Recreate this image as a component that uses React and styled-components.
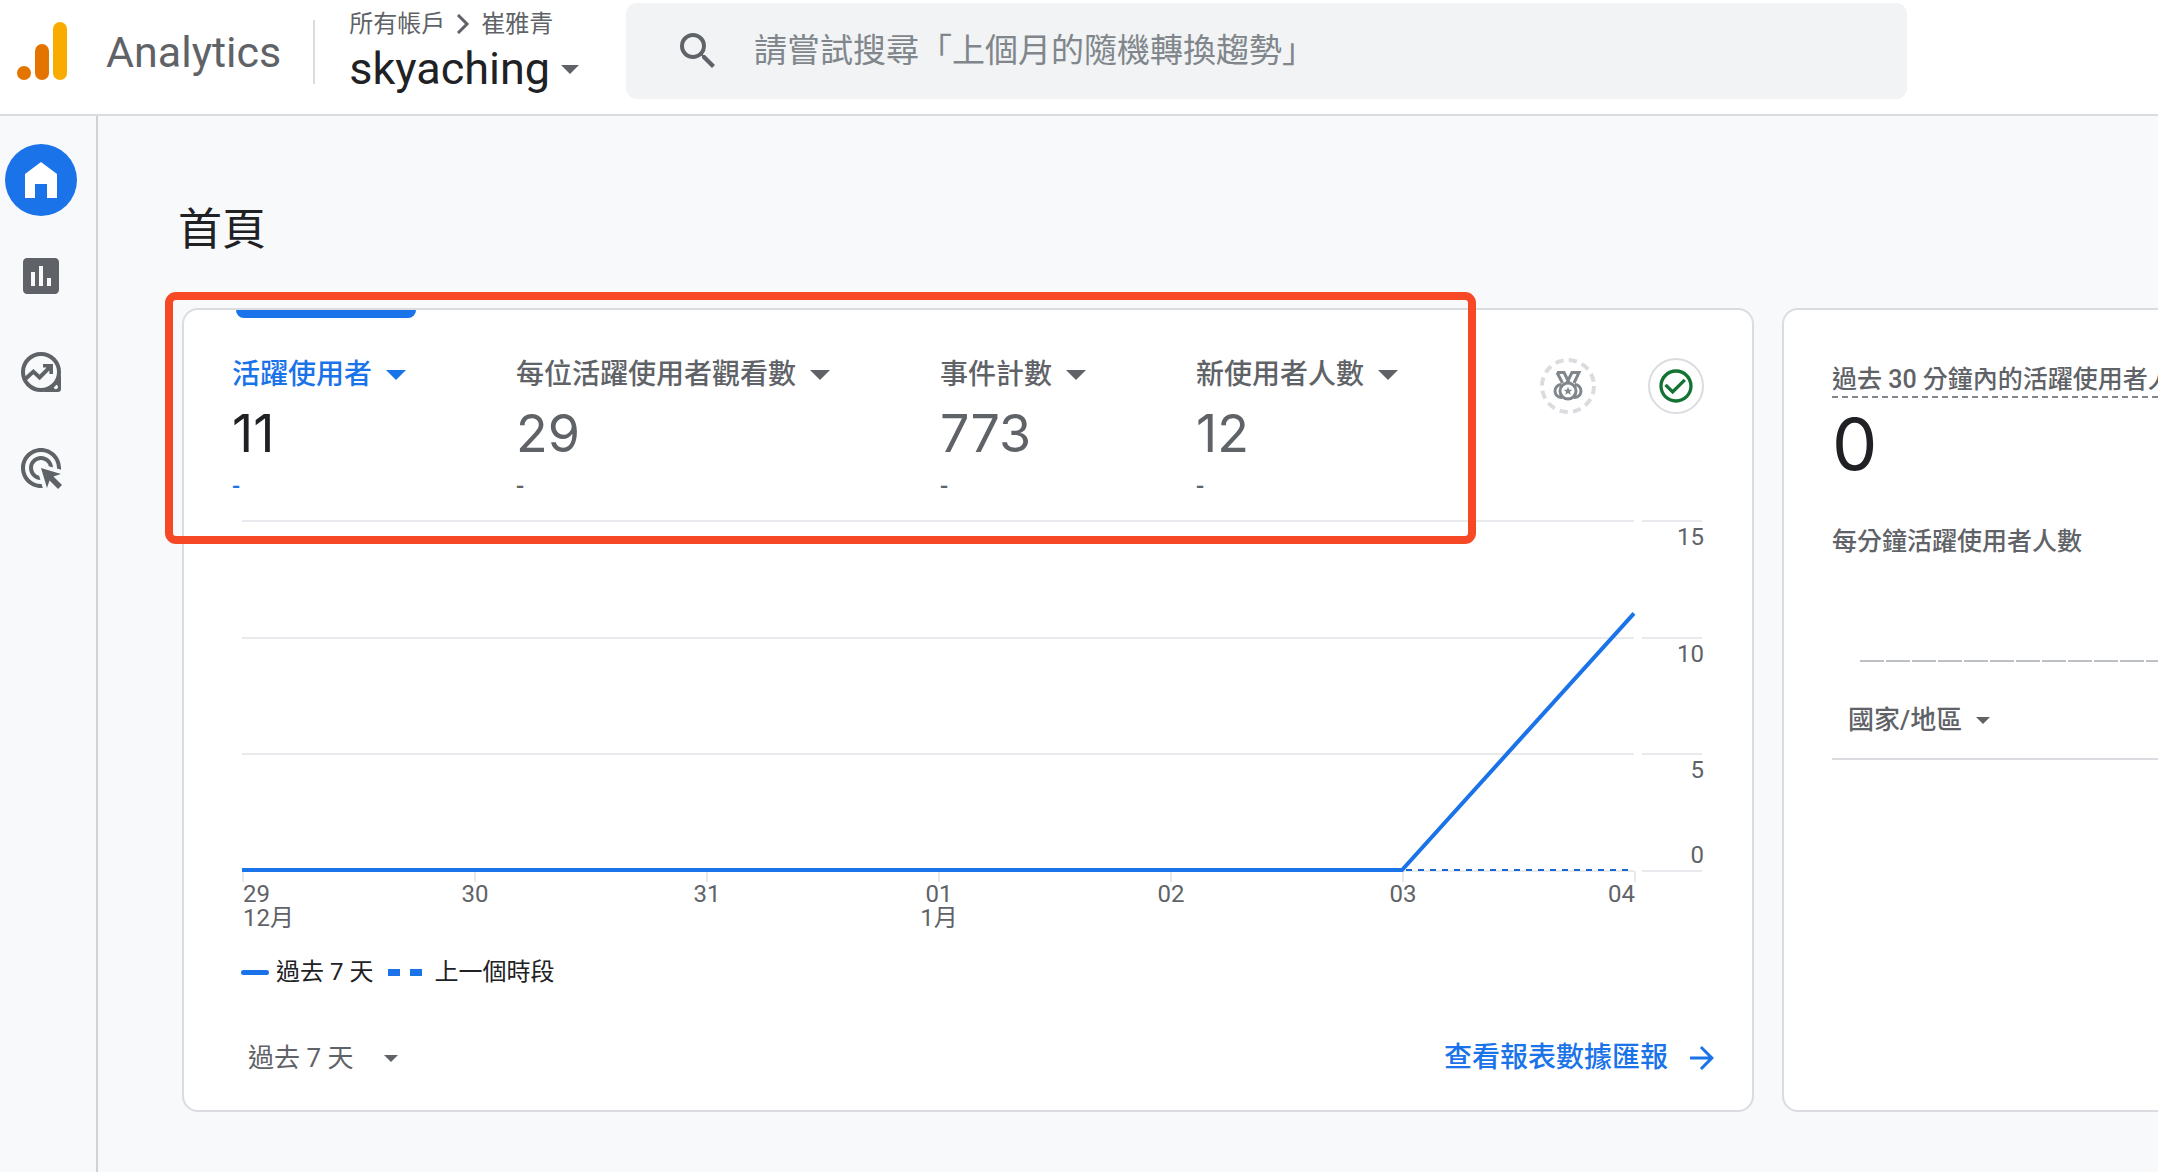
import styled, { createGlobalStyle } from 'styled-components'
import { MdAdsClick, MdArrowForward, MdAssessment, MdCheckCircleOutline, MdSearch } from 'react-icons/md'

const GlobalStyle = createGlobalStyle`
  * {
    box-sizing: border-box;
  }
  body {
    margin: 0;
    background: #f8f9fb;
    color: #202124;
    font-family: Roboto, 'Noto Sans CJK TC', sans-serif;
  }
  button,
  input,
  select {
    font-family: inherit;
  }
`

const Page = styled.div`
  display: flex;
  flex-direction: column;
  min-height: 100vh;
  overflow: hidden;
`

const StyledHeader = styled.header`
  display: flex;
  align-items: center;
  height: 116px;
  padding: 0 16px;
  background: #fff;
  border-bottom: 2px solid #dadce0;
`

const Brand = styled.a`
  display: flex;
  align-items: center;
  gap: 38px;
  padding: 0 32px 12px 0;
  color: #5f6368;
  font-size: 43px;
  line-height: 60px;
  text-decoration: none;
`

const BrandName = styled.span`
  padding-top: 2px;
`

const Property = styled.div`
  display: flex;
  flex-direction: column;
  margin-bottom: 12px;
  position: relative;
  padding-left: 36px;
  &::before {
    content: '';
    position: absolute;
    left: 0;
    top: 14px;
    width: 2px;
    height: 64px;
    background: #dadce0;
  }
`

const Breadcrumb = styled.div`
  display: flex;
  align-items: center;
  gap: 11px;
  color: #5f6368;
  font-size: 24px;
  line-height: 36px;
`

const PropertyButton = styled.button`
  display: flex;
  align-items: center;
  gap: 11px;
  padding: 0;
  border: 0;
  background: none;
  color: #202124;
  font-size: 45px;
  line-height: 54px;
  svg {
    color: #5f6368;
  }
`

const Search = styled.label`
  display: flex;
  align-items: center;
  flex: 1;
  gap: 32px;
  height: 96px;
  margin: 0 235px 12px 47px;
  padding: 0 48px;
  border-radius: 11px;
  background: #f1f3f4;
  color: #5f6368;
`

const SearchInput = styled.input`
  flex: 1;
  min-width: 0;
  padding: 0;
  border: 0;
  outline: 0;
  background: none;
  font-size: 33px;
  line-height: 48px;
  &::placeholder {
    color: #80868b;
    opacity: 1;
  }
`

const Body = styled.div`
  display: flex;
  flex: 1;
`

const Sidebar = styled.nav`
  display: flex;
  flex-direction: column;
  align-items: center;
  gap: 24px;
  width: 98px;
  flex-shrink: 0;
  padding: 28px 14px 0 0;
  border-right: 2px solid #d0d2d6;
`

const NavLink = styled.a`
  display: flex;
  align-items: center;
  justify-content: center;
  width: 72px;
  height: 72px;
  border-radius: 50%;
  background: ${(props) => (props.$active ? '#1a73e8' : 'transparent')};
  color: ${(props) => (props.$active ? '#fff' : '#5f6368')};
`

const Main = styled.main`
  flex: 1;
  min-width: 0;
  padding: 82px 0 60px 80px;
`

const Title = styled.h1`
  margin: 0 0 46px;
  font-size: 44px;
  font-weight: 400;
  line-height: 64px;
`

const Board = styled.div`
  display: flex;
  gap: 28px;
  padding-left: 4px;
`

const Card = styled.section`
  position: relative;
  display: flex;
  flex-direction: column;
  flex: 0 0 ${(props) => props.$basis};
  padding: 0 48px;
  border: 2px solid #dadce0;
  border-radius: 16px;
  background: #fff;
`

const Highlight = styled.div`
  position: absolute;
  top: -18px;
  left: -19px;
  right: 276px;
  height: 252px;
  border: 8px solid #f64824;
  border-radius: 11px;
  pointer-events: none;
`

const Indicator = styled.div`
  width: 180px;
  height: 8px;
  margin-left: 4px;
  border-radius: 0 0 8px 8px;
  background: #1a73e8;
`

const CardTop = styled.div`
  display: flex;
  justify-content: space-between;
  align-items: flex-start;
  padding: 37px 0 21px;
`

const Metrics = styled.div`
  display: flex;
  gap: 110px;
`

const Metric = styled.div`
  color: ${(props) => (props.$active ? '#1a73e8' : '#5f6368')};
`

const MetricValue = styled.div`
  color: ${(props) => (props.$active ? '#202124' : '#5f6368')};
  font-family: Inter, sans-serif;
  font-size: 52px;
  line-height: 78px;
`

const MetricChange = styled.div`
  font-size: 24px;
  font-weight: 500;
  line-height: 26px;
`

const DropdownBox = styled.div`
  display: inline-flex;
  align-items: center;
  gap: ${(props) => props.$gap};
`

const Select = styled.select`
  appearance: none;
  padding: 0;
  border: 0;
  outline: 0;
  background: none;
  color: inherit;
  font-size: ${(props) => props.$size};
  font-weight: ${(props) => props.$weight};
  line-height: 40px;
`

const Badges = styled.div`
  display: flex;
  gap: 52px;
  padding-top: 3px;
`

const Badge = styled.button`
  display: flex;
  align-items: center;
  justify-content: center;
  width: 56px;
  height: 56px;
  padding: 0;
  border: ${(props) => (props.$outlined ? '2px solid #dadce0' : '0')};
  border-radius: 50%;
  background: none;
  color: ${(props) => (props.$outlined ? '#137333' : '#80868b')};
`

const ChartSvg = styled.svg`
  display: block;
  margin-left: 10px;
  overflow: visible;
  font-size: 24px;
  fill: #5f6368;
`

const Legend = styled.div`
  display: flex;
  align-items: center;
  margin: 18px 0 0 9px;
  font-size: 24px;
  line-height: 36px;
`

const LegendItem = styled.span`
  display: flex;
  align-items: center;
  gap: ${(props) => props.$gap};
  margin-right: 15px;
`

const Swatch = styled.span`
  width: 28px;
  height: 5px;
  border-radius: 3px;
  background: #1a73e8;
`

const DashSwatch = styled.span`
  display: flex;
  justify-content: space-between;
  width: 34px;
  &::before,
  &::after {
    content: '';
    width: 12px;
    height: 7px;
    background: #1a73e8;
  }
`

const CardFooter = styled.div`
  display: flex;
  align-items: center;
  justify-content: space-between;
  margin: 48px -16px 32px 16px;
  color: #5f6368;
`

const ReportLink = styled.a`
  display: flex;
  align-items: center;
  gap: 16px;
  color: #1a73e8;
  font-size: 28px;
  font-weight: 500;
  line-height: 40px;
  text-decoration: none;
`

const RealtimeTitle = styled.h2`
  align-self: flex-start;
  margin: 54px 0 0;
  border-bottom: 2px dashed #80868b;
  color: #5f6368;
  font-size: 25px;
  font-weight: 500;
  line-height: 32px;
  white-space: nowrap;
`

const RealtimeValue = styled.div`
  font-family: Inter, sans-serif;
  font-size: 72px;
  line-height: 92px;
`

const RealtimeLabel = styled.div`
  margin-top: 34px;
  color: #5f6368;
  font-size: 25px;
  font-weight: 500;
  line-height: 36px;
`

const MinuteBars = styled.div`
  display: flex;
  gap: 2px;
  margin: 100px 0 0 28px;
  overflow: hidden;
`

const MinuteBar = styled.span`
  flex: 0 0 24px;
  height: 2px;
  background: #bdc1c6;
`

const CountryRow = styled.div`
  margin-top: 38px;
  padding: 0 0 18px 16px;
  border-bottom: 2px solid #dadce0;
  color: #5f6368;
`

const EmptyText = styled.p`
  margin: 30px 0 0;
  color: #5f6368;
  font-size: 24px;
  line-height: 36px;
  text-align: center;
`

const METRICS = [
  { name: '活躍使用者', value: '11' },
  { name: '每位活躍使用者觀看數', value: '29' },
  { name: '事件計數', value: '773' },
  { name: '新使用者人數', value: '12' },
]

const DAYS = [
  { day: '29', month: '12月', users: 0 },
  { day: '30', users: 0 },
  { day: '31', users: 0 },
  { day: '01', month: '1月', users: 0 },
  { day: '02', users: 0 },
  { day: '03', users: 0 },
  { day: '04', users: 11 },
]

const MAX_USERS = 15
const PLOT_WIDTH = 1392
const PLOT_HEIGHT = 350

function Caret({ width = 14, height = 7 }) {
  return (
    <svg width={width} height={height} viewBox="0 0 20 10" preserveAspectRatio="none" aria-hidden="true">
      <path d="M0 0h20L10 10z" fill="currentColor" />
    </svg>
  )
}

function Dropdown({ label, value, size, weight = 400, gap, caret }) {
  return (
    <DropdownBox $gap={gap}>
      <Select aria-label={label} $size={size} $weight={weight}>
        <option>{value}</option>
      </Select>
      <Caret {...caret} />
    </DropdownBox>
  )
}

function Logo() {
  return (
    <svg width="52" height="60" viewBox="0 0 52 60" aria-hidden="true">
      <circle cx="8" cy="52" r="7" fill="#e37400" />
      <rect x="19" y="23" width="14" height="36" rx="7" fill="#e37400" />
      <rect x="37" y="1" width="14" height="58" rx="7" fill="#f9ab00" />
    </svg>
  )
}

function HomeIcon() {
  return (
    <svg width="48" height="48" viewBox="0 0 24 24" aria-hidden="true">
      <path d="M4 21V9l8-6 8 6v12h-5v-7H9v7z" fill="currentColor" />
    </svg>
  )
}

function ExploreIcon() {
  return (
    <svg width="48" height="48" viewBox="0 0 24 24" aria-hidden="true">
      <g fill="none" stroke="currentColor" strokeWidth="2">
        <circle cx="12" cy="12" r="9" />
        <path d="M4 15.6l4.2-3.8 3.1 2.9 5.4-5.4" />
      </g>
      <path d="M13 8h5v5h-1.8v-1.6L14.6 9.8H13z" fill="currentColor" />
      <path
        d="M22 12v8.5a1.5 1.5 0 0 1-1.5 1.5H12a10 10 0 0 0 5.5-2.5A10 10 0 0 0 22 12zM19.4 18.4a1.1 1.1 0 1 0 .01 0z"
        fill="currentColor"
        fillRule="evenodd"
      />
    </svg>
  )
}

function MedalIcon() {
  return (
    <svg width="56" height="56" viewBox="0 0 56 56" fill="none" aria-hidden="true">
      <circle cx="28" cy="28" r="26" stroke="#dadce0" strokeWidth="4" strokeDasharray="8.2 5.414" />
      <g stroke="currentColor" strokeWidth="3">
        <path d="M17 14.5h7l4 8 4-8h7L34 25M17 14.5L22.5 25M24 14.5l5 10M32 14.5l-5 10" />
        <circle cx="28" cy="33" r="8" />
        <path d="M21 26.5a6.5 6.5 0 1 0 1 13M35 26.5a6.5 6.5 0 1 1-1 13" />
      </g>
      <path
        d="M28 28.5l1.1 3.2h3.4l-2.7 2 1 3.3-2.8-2-2.8 2 1-3.3-2.7-2h3.4z"
        fill="currentColor"
      />
    </svg>
  )
}

function Chart() {
  const x = (i) => (i * PLOT_WIDTH) / (DAYS.length - 1)
  const y = (users) => PLOT_HEIGHT - (users * PLOT_HEIGHT) / MAX_USERS
  const points = DAYS.map((d, i) => `${x(i)},${y(d.users)}`).join(' ')
  const anchor = (i) => (i === 0 ? 'start' : i === DAYS.length - 1 ? 'end' : 'middle')

  return (
    <ChartSvg viewBox="0 0 1462 416" role="img" aria-label="活躍使用者">
      {[15, 10, 5, 0].map((tick) => (
        <g key={tick}>
          <path
            d={`M0 ${Math.round(y(tick)) + 1}H${PLOT_WIDTH}m8 0h60`}
            stroke="#e8eaed"
            strokeWidth="2"
          />
          <text x="1462" y={Math.round(y(tick)) + (tick ? 25 : -7)} textAnchor="end">
            {tick}
          </text>
        </g>
      ))}
      {DAYS.map((d, i) => (
        <g key={d.day}>
          <path d={`M${x(i) + 1} ${PLOT_HEIGHT + 1}v11`} stroke="#e8eaed" strokeWidth="2" />
          <text x={x(i) + 1} y="382" textAnchor={anchor(i)}>
            {d.day}
          </text>
          <text x={x(i) + 1} y="406" textAnchor={anchor(i)}>
            {d.month}
          </text>
        </g>
      ))}
      <path d={`M${x(5)} 350H${PLOT_WIDTH}`} stroke="#1967d2" strokeWidth="2" strokeDasharray="6 6" strokeDashoffset="8" />
      <polyline points={points} fill="none" stroke="#1a73e8" strokeWidth="4" />
    </ChartSvg>
  )
}

function Header() {
  return (
    <StyledHeader>
      <Brand href="#home">
        <Logo />
        <BrandName>Analytics</BrandName>
      </Brand>
      <Property>
        <Breadcrumb>
          所有帳戶
          <svg width="14" height="20" viewBox="0 0 14 20" aria-hidden="true">
            <path d="M2 1l9 9-9 9" fill="none" stroke="currentColor" strokeWidth="3" />
          </svg>
          崔雅青
        </Breadcrumb>
        <PropertyButton type="button">
          skyaching
          <Caret width={18} height={9} />
        </PropertyButton>
      </Property>
      <Search>
        <MdSearch size={48} aria-hidden="true" />
        <SearchInput type="search" aria-label="搜尋" placeholder="請嘗試搜尋「上個月的隨機轉換趨勢」" />
      </Search>
    </StyledHeader>
  )
}

function OverviewCard() {
  return (
    <Card $basis="calc(100% - 404px)">
      <Indicator />
      <CardTop>
        <Metrics>
          {METRICS.map((m, i) => (
            <Metric key={m.name} $active={i === 0}>
              <Dropdown
                label={m.name}
                value={m.name}
                size="28px"
                weight={500}
                gap="13px"
                caret={{ width: 20, height: 10 }}
              />
              <MetricValue $active={i === 0}>{m.value}</MetricValue>
              <MetricChange>-</MetricChange>
            </Metric>
          ))}
        </Metrics>
        <Badges>
          <Badge type="button" aria-label="基準">
            <MedalIcon />
          </Badge>
          <Badge type="button" aria-label="資料品質" $outlined>
            <MdCheckCircleOutline size={40} />
          </Badge>
        </Badges>
      </CardTop>
      <Chart />
      <Legend>
        <LegendItem $gap="7px">
          <Swatch />
          過去 7 天
        </LegendItem>
        <LegendItem $gap="12px">
          <DashSwatch />
          上一個時段
        </LegendItem>
      </Legend>
      <CardFooter>
        <Dropdown label="日期範圍" value="過去 7 天" size="26px" gap="30px" />
        <ReportLink href="#reports">
          查看報表數據匯報
          <MdArrowForward size={36} />
        </ReportLink>
      </CardFooter>
      <Highlight />
    </Card>
  )
}

function RealtimeCard() {
  return (
    <Card $basis="860px">
      <RealtimeTitle>過去 30 分鐘內的活躍使用者人數</RealtimeTitle>
      <RealtimeValue>0</RealtimeValue>
      <RealtimeLabel>每分鐘活躍使用者人數</RealtimeLabel>
      <MinuteBars>
        {Array.from({ length: 30 }, (_, i) => (
          <MinuteBar key={i} />
        ))}
      </MinuteBars>
      <CountryRow>
        <Dropdown label="維度" value="國家/地區" size="26px" weight={500} gap="13px" />
      </CountryRow>
      <EmptyText>目前沒有資料</EmptyText>
    </Card>
  )
}

function App() {
  return (
    <Page>
      <GlobalStyle />
      <Header />
      <Body>
        <Sidebar>
          <NavLink href="#home" aria-label="首頁" $active>
            <HomeIcon />
          </NavLink>
          <NavLink href="#reports" aria-label="報表">
            <MdAssessment size={48} />
          </NavLink>
          <NavLink href="#explore" aria-label="探索">
            <ExploreIcon />
          </NavLink>
          <NavLink href="#ads" aria-label="廣告">
            <MdAdsClick size={48} />
          </NavLink>
        </Sidebar>
        <Main>
          <Title>首頁</Title>
          <Board>
            <OverviewCard />
            <RealtimeCard />
          </Board>
        </Main>
      </Body>
    </Page>
  )
}

export default App
